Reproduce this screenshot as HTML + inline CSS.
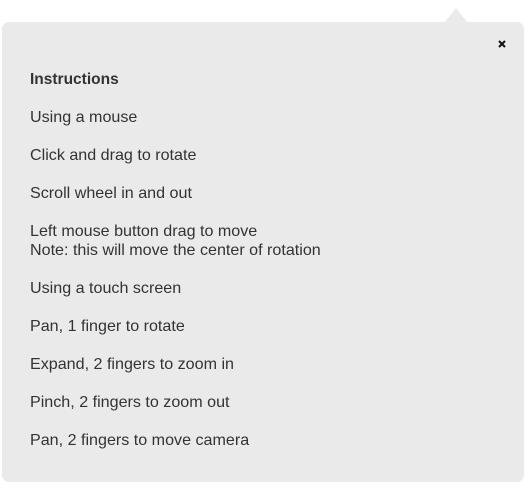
<!DOCTYPE html>
<html><head><meta charset="utf-8"><style>
html,body{margin:0;padding:0;background:#fff;width:529px;height:489px;overflow:hidden}
.p{position:absolute;left:2px;top:22px;width:522px;height:460px;background:#eaeaea;border-radius:7px}
.tri{position:absolute;left:445px;top:8px;width:0;height:0;border-left:11px solid transparent;border-right:11px solid transparent;border-bottom:14px solid #eaeaea}
.t{position:absolute;left:30px;font-family:"Liberation Sans",sans-serif;font-size:16.1px;color:#333;line-height:19px;white-space:nowrap}
</style></head><body>
<div class="tri"></div>
<div class="p"></div>
<svg style="position:absolute;left:498px;top:40px" width="8" height="8" viewBox="0 0 8 8"><path d="M1 1L7 7M7 1L1 7" stroke="#111" stroke-width="2"/></svg>
<div class="t" style="top:70px;font-weight:bold;font-size:15.5px">Instructions</div>
<div class="t" style="top:108px">Using a mouse</div>
<div class="t" style="top:146px">Click and drag to rotate</div>
<div class="t" style="top:184px">Scroll wheel in and out</div>
<div class="t" style="top:222px">Left mouse button drag to move<br>Note: this will move the center of rotation</div>
<div class="t" style="top:279px">Using a touch screen</div>
<div class="t" style="top:317px">Pan, 1 finger to rotate</div>
<div class="t" style="top:355px">Expand, 2 fingers to zoom in</div>
<div class="t" style="top:393px">Pinch, 2 fingers to zoom out</div>
<div class="t" style="top:431px">Pan, 2 fingers to move camera</div>
</body></html>
